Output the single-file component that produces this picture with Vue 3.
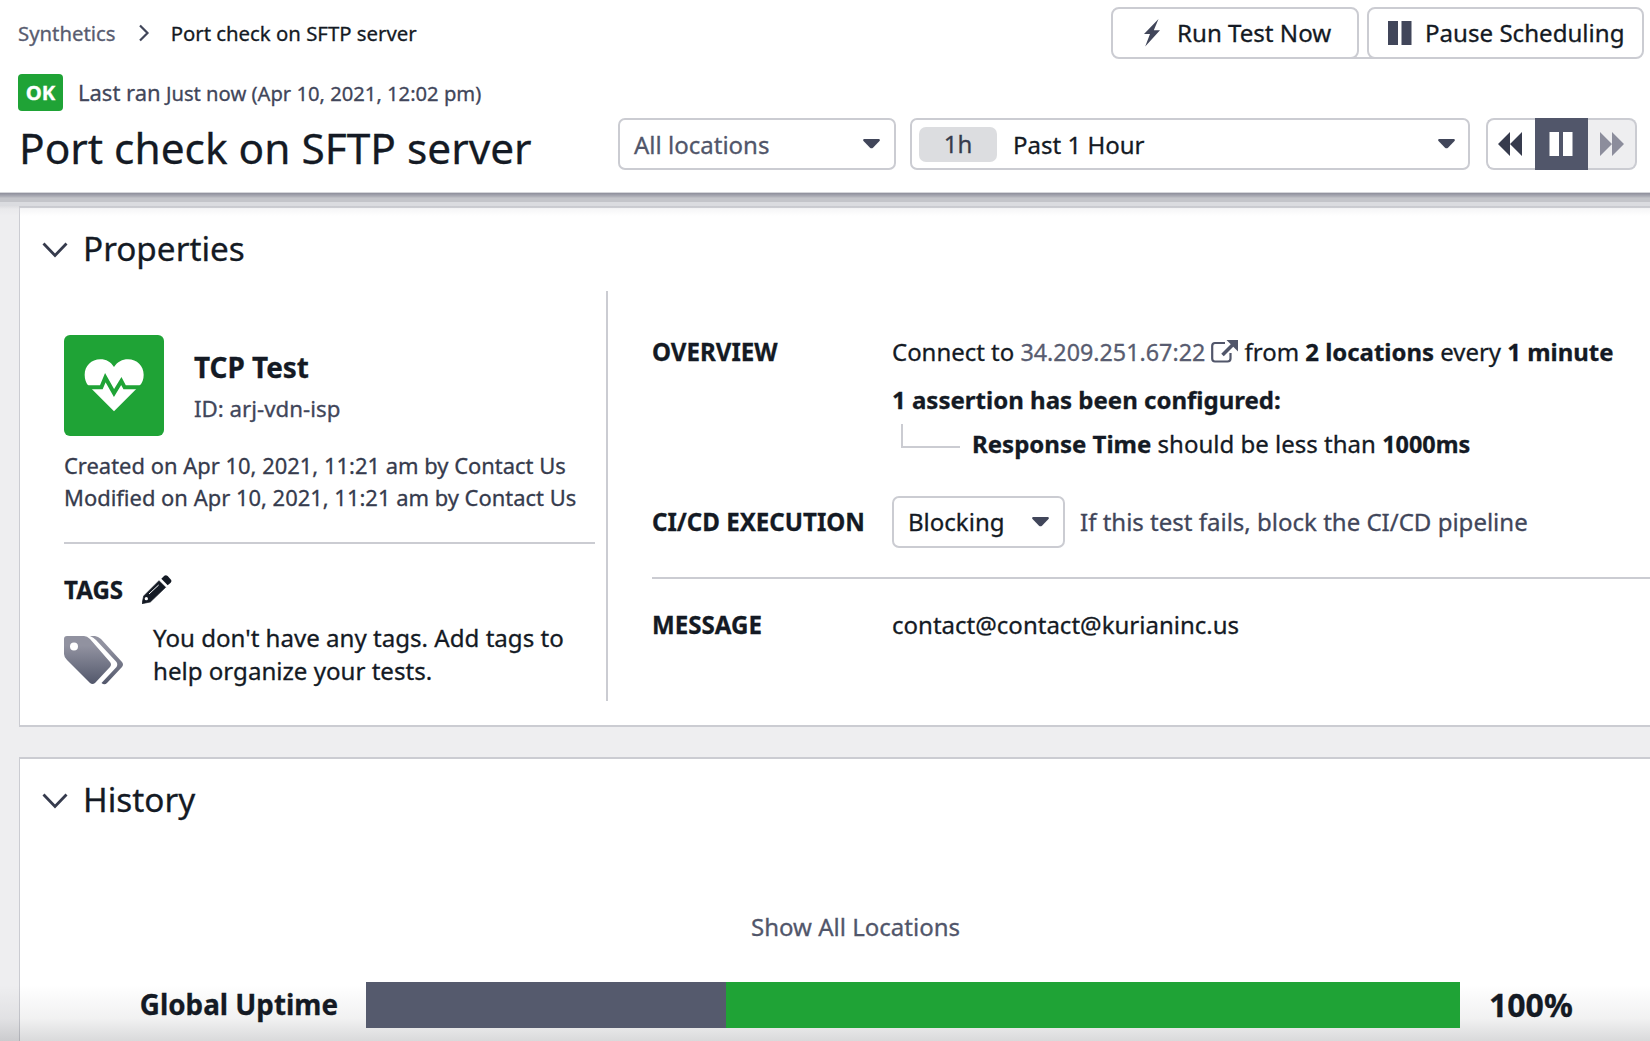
<script setup>
const created = 'Created on Apr 10, 2021, 11:21 am by Contact Us'
const modified = 'Modified on Apr 10, 2021, 11:21 am by Contact Us'
const uptime = [
  { kind: 'nodata', share: 32.9 },
  { kind: 'ok', share: 67.1 },
]
</script>

<template>
  <div class="page">
    <header class="header">
      <div class="intro">
        <nav class="crumbs">
          <a class="crumb-link">Synthetics</a>
          <svg class="crumb-sep" width="12" height="18" viewBox="0 0 12 18"><path d="M2 1.5 9.5 9 2 16.5" fill="none" stroke="#41465a" stroke-width="2.2" /></svg>
          <span>Port check on SFTP server</span>
        </nav>
        <div class="status">
          <span class="badge">OK</span>
          <span class="ran"><span class="ran-label">Last ran</span> Just now (Apr 10, 2021, 12:02 pm)</span>
        </div>
        <h1>Port check on SFTP server</h1>
      </div>

      <div class="tools">
        <div class="actions">
          <button class="btn run">
            <svg width="18" height="28" viewBox="0 0 18 28"><path d="M15.5 0 1 15H7L2.200 27.500 17 11.200H10.800Z" fill="#41465a" /></svg>
            <span>Run Test Now</span>
          </button>
          <button class="btn pause">
            <svg width="24" height="24" viewBox="0 0 24 24"><path d="M0 0h10v24H0zM13.500 0h10v24h-10z" fill="#41465a" /></svg>
            <span>Pause Scheduling</span>
          </button>
        </div>
        <div class="filters">
          <div class="select locations">
            <span>All locations</span>
            <svg class="caret" width="17" height="10" viewBox="0 0 17 10"><path d="M1 0h15q1.500.5.5 2L10 8.700q-1.500 1.300-3 0L.5 2Q-.5.5 1 0z" fill="#41465a" /></svg>
          </div>
          <div class="select range">
            <span class="pill">1h</span>
            <span class="range-text">Past 1 Hour</span>
            <svg class="caret" width="17" height="10" viewBox="0 0 17 10"><path d="M1 0h15q1.500.5.5 2L10 8.700q-1.500 1.300-3 0L.5 2Q-.5.5 1 0z" fill="#41465a" /></svg>
          </div>
          <div class="media">
            <span class="media-btn back">
              <svg width="24" height="24" viewBox="0 0 24 24"><path d="M12 0v24L0 12zM24 0v24L12 12z" fill="#363b4d" /></svg>
            </span>
            <span class="media-btn hold">
              <svg width="24" height="24" viewBox="0 0 24 24"><path d="M.5 0h9.500v24H.5zM14 0h9.500v24H14z" fill="#fff" /></svg>
            </span>
            <span class="media-btn next">
              <svg width="24" height="24" viewBox="0 0 24 24"><path d="M0 0v24l12-12zM12 0v24l12-12z" fill="#8c8d9c" /></svg>
            </span>
          </div>
        </div>
      </div>
    </header>

    <main class="content">
      <section class="panel properties">
        <div class="panel-head">
          <svg width="26" height="16" viewBox="0 0 26 16"><path d="M1.500 1.500 13 13.500 24.500 1.500" fill="none" stroke="#363b4d" stroke-width="2.800" /></svg>
          <h2>Properties</h2>
        </div>
        <div class="props">
          <div class="summary">
            <div class="identity">
              <svg class="type-icon" width="100" height="101" viewBox="28 14 300 303">
                <rect x="28" y="14" width="300" height="303" rx="18" fill="#1fa336" />
                <path d="M178 243 100 165C94 157 90 147 90 133 90 107 110 87 137 87 155 87 168 95 178 110 188 95 203 87 220 87 247 87 267 107 267 133 267 147 263 157 256 165Z" fill="#fff" />
                <path d="M86 171H140L152 142 178 188 200 152 210 171H272" fill="none" stroke="#1fa336" stroke-width="12" />
              </svg>
              <div class="names">
                <div class="type">TCP Test</div>
                <div class="id">ID: arj-vdn-isp</div>
              </div>
            </div>
            <div class="dates">
              <div>{{ created }}</div>
              <div>{{ modified }}</div>
            </div>
            <div class="tags-head">
              <span class="label">TAGS</span>
              <svg width="30" height="29" viewBox="37 31 90 87">
                <path d="M37 117 42 94 88 48 108 68 62 112Z" fill="#141a24" stroke="#141a24" stroke-width="2" stroke-linejoin="round" />
                <path d="M95 42 104 33Q109 30 114 34L124 45Q127 50 123 54L114 62Z" fill="#141a24" />
                <path d="M58 88 87 61" stroke="#fff" stroke-width="3" />
                <circle cx="50" cy="102" r="5" fill="#fff" />
              </svg>
            </div>
            <div class="tags-empty">
              <svg width="60" height="49" viewBox="0 0 60 49">
                <defs>
                  <linearGradient id="tagFill" x1="0" y1="0" x2="0" y2="49" gradientUnits="userSpaceOnUse">
                    <stop offset=".2" stop-color="#9192a0" />
                    <stop offset="1" stop-color="#51566a" />
                  </linearGradient>
                </defs>
                <path fill="url(#tagFill)" fill-rule="evenodd" d="M3 0H20Q23 0 26 3L46 26Q48 28.500 46 31L31 47Q28.500 49 26 47L3 24Q0 21 0 18V3Q0 0 3 0ZM10 6.500A4 4 0 1 0 10 14.500A4 4 0 1 0 10 6.500Z" />
                <path fill="url(#tagFill)" d="M26 0H31Q34 .5 37 3L58 26Q60 28.500 58 31L43 47Q40.500 49.500 37.500 47L52.500 31Q54 28.500 52.500 26L32 4Q29.500 1.500 26 0Z" />
              </svg>
              <p>You don't have any tags. Add tags to help organize your tests.</p>
            </div>
          </div>

          <div class="details">
            <div class="row overview">
              <span class="label">OVERVIEW</span>
              <div class="value">
                <div class="line connect">
                  Connect to <a class="ip">34.209.251.67:22</a>
                  <svg class="ext" width="27" height="23" viewBox="0 0 27 23">
                    <path d="M14 3H4Q1.200 3 1.200 6V18.500Q1.200 21.500 4 21.500H16.500Q19.500 21.500 19.500 18.500V13" fill="none" stroke="#51566a" stroke-width="2.200" />
                    <path d="M11.500 15 22 4.500" stroke="#51566a" stroke-width="3.600" />
                    <path d="M15.500 0H27V11.500Z" fill="#51566a" />
                  </svg>
                  from <b>2 locations</b> every <b>1 minute</b>
                </div>
                <div class="line count"><b>1 assertion has been configured:</b></div>
                <div class="line assertion">
                  <span class="elbow"></span>
                  <span><b>Response Time</b> should be less than <b class="limit">1000ms</b></span>
                </div>
              </div>
            </div>
            <div class="row execution">
              <span class="label">CI/CD EXECUTION</span>
              <div class="value">
                <div class="select blocking">
                  <span>Blocking</span>
                  <svg class="caret" width="17" height="10" viewBox="0 0 17 10"><path d="M1 0h15q1.500.5.5 2L10 8.700q-1.500 1.300-3 0L.5 2Q-.5.5 1 0z" fill="#41465a" /></svg>
                </div>
                <span class="hint">If this test fails, block the CI/CD pipeline</span>
              </div>
            </div>
            <div class="row message">
              <span class="label">MESSAGE</span>
              <div class="value">contact@contact@kurianinc.us</div>
            </div>
          </div>
        </div>
      </section>

      <section class="panel history">
        <div class="panel-head">
          <svg width="26" height="16" viewBox="0 0 26 16"><path d="M1.500 1.500 13 13.500 24.500 1.500" fill="none" stroke="#363b4d" stroke-width="2.800" /></svg>
          <h2>History</h2>
        </div>
        <a class="show-all">Show All Locations</a>
        <div class="uptime">
          <span class="uptime-label">Global Uptime</span>
          <div class="bar">
            <span v-for="part in uptime" :key="part.kind" :class="part.kind" :style="{ width: part.share + '%' }"></span>
          </div>
          <span class="percent">100%</span>
        </div>
      </section>
    </main>
    <div class="header-shade"></div>
    <div class="bottom-shade"></div>
  </div>
</template>

<style>
body {
  margin: 0;
}
</style>

<style scoped>
.page {
  position: relative;
  box-sizing: border-box;
  width: 1650px;
  height: 1041px;
  overflow: hidden;
  background: #eeeef0;
  color: #141a24;
  font-family: "Noto Sans", "Open Sans", sans-serif;
  font-size: 24.020px;
  -webkit-text-stroke: 0.3px;
}
.page * {
  box-sizing: border-box;
}
svg {
  display: block;
  flex: none;
}
h1,
h2,
p {
  margin: 0;
  font-weight: 400;
}
.header {
  display: flex;
  justify-content: space-between;
  height: 193px;
  background: #fff;
}
.intro {
  padding: 13px 0 0 18px;
  white-space: nowrap;
}
.crumbs {
  display: flex;
  align-items: center;
  height: 40px;
  font-size: 20.350px;
}
.crumb-link {
  color: #585c70;
}
.crumb-sep {
  margin: 0 21px 0 22px;
}
.status {
  display: flex;
  align-items: center;
  height: 37px;
  margin-top: 21px;
}
.badge {
  width: 45px;
  height: 37px;
  border-radius: 4px;
  background: #1fa336;
  color: #fff;
  font-size: 20.400px;
  font-weight: 700;
  line-height: 36px;
  text-align: center;
}
.ran {
  margin-left: 15px;
  color: #41465a;
  font-size: 20.200px;
  line-height: 38px;
}
.ran-label {
  font-size: 22px;
}
h1 {
  margin: 9px 0 0 1px;
  font-size: 42.400px;
  line-height: 56px;
}
.tools {
  display: flex;
  flex-direction: column;
  align-items: flex-end;
  padding: 7px 6px 0 0;
}
.actions {
  display: flex;
  gap: 8px;
}
.btn {
  position: relative;
  display: flex;
  align-items: center;
  height: 52px;
  padding: 0;
  border: 2px solid #cbccd2;
  border-radius: 8px;
  background: #fff;
  color: inherit;
  font: inherit;
  font-size: 24.100px;
}
.run {
  width: 248px;
  padding-left: 30px;
}
.run span {
  margin-left: 16px;
}
.pause {
  width: 277px;
  padding-left: 19px;
}
.pause span {
  margin-left: 13px;
}
.btn span {
  margin-top: -1px;
}
.pause::before {
  content: "";
  position: absolute;
  left: -18px;
  bottom: -2px;
  width: 26px;
  height: 2px;
  background: #cbccd2;
}
.filters {
  display: flex;
  margin: 59px 7px 0 0;
}
.select {
  display: flex;
  align-items: center;
  height: 52px;
  border: 2px solid #cbccd2;
  border-radius: 7px;
  background: #fff;
}
.caret {
  margin-left: auto;
}
.locations {
  width: 278px;
  padding: 0 14px 0 14px;
  color: #51566a;
}
.range {
  width: 560px;
  margin-left: 14px;
  padding: 0 13px 0 7px;
}
.pill {
  width: 78px;
  height: 35px;
  border-radius: 7px;
  background: #dcdde0;
  color: #363b4d;
  line-height: 34px;
  text-align: center;
}
.range-text {
  margin-left: 16px;
}
.media {
  display: flex;
  width: 151px;
  height: 52px;
  margin-left: 16px;
}
.media-btn {
  display: flex;
  align-items: center;
  justify-content: center;
}
.back {
  width: 49px;
  padding-right: 3px;
  border: 2px solid #cbccd2;
  border-right: 0;
  border-radius: 8px 0 0 8px;
}
.hold {
  width: 53px;
  padding-right: 2px;
  background: #51566a;
}
.next {
  width: 49px;
  border: 2px solid #cbccd2;
  border-left: 0;
  border-radius: 0 8px 8px 0;
  background: #eeeef0;
}
.header-shade {
  position: absolute;
  top: 192px;
  left: 0;
  width: 100%;
  height: 24px;
  background: linear-gradient(
    #d5d6da 0,
    #d5d6da 1px,
    #92939f 1.500px,
    #a0a1ac 3px,
    #b4b5bc 5px,
    #c4c5ca 6px,
    #c4c5ca 10px,
    #dbdce0 10.500px,
    #dbdce0 13.500px,
    rgba(196, 197, 202, 0.4) 14px,
    rgba(220, 220, 224, 0.25) 17px,
    transparent 24px
  );
}
.bottom-shade {
  position: absolute;
  bottom: 0;
  left: 0;
  width: 100%;
  height: 56px;
  background: linear-gradient(transparent, rgba(20, 22, 30, 0.06) 60%, rgba(20, 22, 30, 0.16));
}
.content {
  padding: 13px 0 0 19px;
}
.panel {
  border: 2px solid #cbccd2;
  border-right: 0;
  border-left-width: 1px;
  background: #fff;
}
.properties {
  height: 521px;
}
.history {
  height: 320px;
  margin-top: 30px;
}
.panel-head {
  display: flex;
  align-items: center;
  height: 50px;
  margin: 15px 0 0 22px;
}
.panel-head svg {
  margin-top: 4px;
}
.panel-head h2 {
  margin-left: 15px;
  font-size: 33.300px;
  line-height: 50px;
}
.props {
  display: flex;
  height: 410px;
  margin: 18px 0 0 44px;
}
.summary {
  width: 544px;
  padding: 44px 11px 0 0;
  border-right: 2px solid #cbccd2;
}
.identity {
  display: flex;
}
.names {
  margin: 12px 0 0 30px;
  line-height: 41px;
}
.type {
  font-size: 27.900px;
  font-weight: 700;
}
.id {
  color: #41465a;
  font-size: 22.300px;
}
.dates {
  height: 94px;
  margin-top: 14px;
  border-bottom: 2px solid #cbccd2;
  color: #363b4d;
  font-size: 21.950px;
  line-height: 31.500px;
  white-space: nowrap;
}
.label {
  font-size: 24.100px;
  font-weight: 700;
}
.tags-head {
  display: flex;
  align-items: center;
  height: 40px;
  margin-top: 25px;
}
.tags-head svg {
  margin-left: 19px;
}
.tags-empty {
  display: flex;
  margin-top: 12px;
}
.tags-empty svg {
  margin-top: 15px;
}
.tags-empty p {
  width: 440px;
  margin-left: 29px;
  font-size: 24.100px;
  line-height: 33.400px;
}
.details {
  flex: 1;
  padding: 41px 0 0 44px;
}
.row {
  display: flex;
}
.row > .label {
  width: 240px;
  line-height: 40px;
}
.value {
  white-space: nowrap;
  line-height: 40px;
}
.connect {
  font-size: 23.950px;
}
.ip {
  color: #585c70;
  font-size: 23.300px;
}
.line {
  height: 40px;
}
.ext {
  display: inline-block;
  margin: 0 0 0 6px;
  vertical-align: -2px;
}
.count {
  height: 52px;
  line-height: 56px;
}
.assertion {
  display: flex;
}
.limit {
  font-size: 23.400px;
}
.elbow {
  width: 59px;
  height: 24px;
  margin: 0 12px 0 9px;
  border: solid #cbccd2;
  border-width: 0 0 2px 2px;
}
.execution {
  align-items: center;
  margin-top: 32px;
}
.execution .value {
  display: flex;
  align-items: center;
}
.blocking {
  width: 173px;
  padding: 0 14px 0 14px;
}
.hint {
  margin-left: 15px;
  color: #41465a;
}
.message {
  margin-top: 29px;
  padding-top: 26px;
  border-top: 2px solid #cbccd2;
}
.show-all {
  display: block;
  width: 208px;
  margin: 83px 0 0 731px;
  color: #51566a;
  line-height: 40px;
  white-space: nowrap;
}
.uptime {
  display: flex;
  align-items: center;
  height: 46px;
  margin-top: 35px;
}
.uptime-label {
  width: 318px;
  margin-top: -2px;
  font-size: 27.800px;
  font-weight: 700;
  text-align: right;
}
.bar {
  position: relative;
  z-index: 1;
  display: flex;
  width: 1094px;
  height: 46px;
  margin-left: 28px;
}
.nodata {
  background: #555a6d;
}
.ok {
  background: #1fa336;
}
.percent {
  margin: -2px 0 0 29px;
  font-size: 32px;
  font-weight: 700;
}
</style>
